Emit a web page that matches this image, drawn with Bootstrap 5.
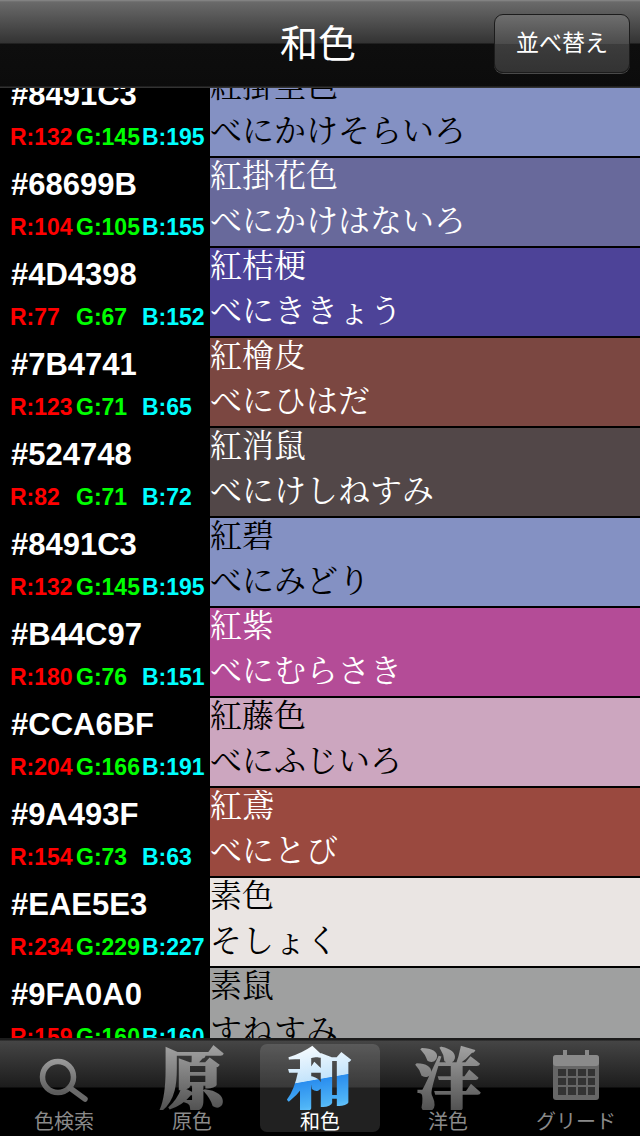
<!DOCTYPE html>
<html lang="ja">
<head>
    <meta charset="UTF-8">
    <meta name="viewport" content="width=device-width, initial-scale=1.0">
    <title>和色</title>
    <link href="https://cdn.jsdelivr.net/npm/bootstrap@5.3.0/dist/css/bootstrap.min.css" rel="stylesheet">
    <style>
        html, body { background: #000; }
        .app-screen { width: 640px; height: 1136px; overflow: hidden; background: #000; font-family: "Liberation Sans", "Noto Sans CJK JP", sans-serif; }

        .top-bar { height: 88px; flex: none; background: linear-gradient(#8a8a8a 0, #6a6a6a 2px, #333 43px, #0e0e0e 44px, #0c0c0c 86px, #333 87px); }
        .top-title { font-family: "Noto Sans CJK JP", sans-serif; font-size: 38px; line-height: 1; color: #fff; left: 280px; top: 22px; }
        .sort-btn { width: 136px; height: 59px; margin: 14px 10px 0 auto; padding: 0 0 5px; font-family: "Noto Sans CJK JP", sans-serif; font-size: 23px; line-height: 1; color: #fff; border: 1px solid #1c1c1c; border-radius: 9px; background: linear-gradient(#6e6e6e, #4c4c4c 50%, #3c3c3c 51%, #333); box-shadow: 0 1px 0 #4a4a4a; }

        .color-list { flex: 1 1 0; min-height: 0; overflow: hidden; }
        .color-rows { margin-top: -20px; }
        .color-row { height: 90px; flex: none; }
        .code-col { width: 210px; flex: none; color: #fff; font-weight: 700; }
        .hex-code { font-size: 31px; line-height: 34px; padding: 10px 0 0 11px; }
        .rgb-line { font-size: 23px; line-height: 26px; padding: 12px 0 0 10px; }
        .rgb-line span { width: 66px; flex: none; white-space: nowrap; }
        .val-r { color: #f00; }
        .val-g { color: #0f0; }
        .val-b { color: #0ff; }
        .swatch { height: 88px; overflow: hidden; font-family: "Liberation Serif", "Noto Serif CJK JP", "Noto Sans CJK JP", serif; font-size: 32px; line-height: 45px; }
        .swatch div { white-space: nowrap; position: relative; top: -4px; }
        .on-dark { color: #fff; }
        .on-light { color: #000; }

        .tab-bar { height: 98px; flex: none; background: linear-gradient(#1c1c1c 0, #1c1c1c 2px, #454545 3px, #1c1c1c 49px, #000 50px); padding: 6px 0 4px; }
        .tab-item { width: 128px; flex: none; height: 88px; font-family: "Noto Sans CJK JP", sans-serif; color: #8a8a8a; font-size: 20px; line-height: 1; }
        .tab-item.on { width: 120px; margin: 0 4px; border-radius: 7px; background: rgba(255,255,255,.13); color: #fff; }
        .tab-icon { height: 66px; flex: none; }
        .tab-glyph { font-family: "Noto Serif CJK JP", "Noto Sans CJK JP", serif; font-weight: 900; font-size: 66px; line-height: 64px; background: linear-gradient(#a4a4a4, #525252); -webkit-background-clip: text; background-clip: text; color: transparent; -webkit-text-stroke: 2px transparent; }
        .tab-item.on .tab-glyph { background: linear-gradient(170deg, #fff 0, #c4e4fb 52%, #2a8eef 53%, #4fb4f6 85%, #7ad0ff); -webkit-background-clip: text; background-clip: text; }
        .icon-search { margin-top: 14px; }
        .icon-calendar { margin-top: 6px; }
        .tab-label { margin-top: 1px; }
    </style>
</head>
<body>
    <div class="app-screen d-flex flex-column">

        <!-- Top bar -->
        <div class="top-bar d-flex position-relative">
            <div class="top-title position-absolute">和色</div>
            <button class="sort-btn" type="button">並べ替え</button>
        </div>

        <!-- Colour list -->
        <div class="color-list">
            <div class="color-rows">
                <div class="color-row d-flex"><div class="code-col"><div class="hex-code">#8491C3</div><div class="rgb-line d-flex"><span class="val-r">R:132</span><span class="val-g">G:145</span><span class="val-b">B:195</span></div></div><div class="swatch flex-grow-1 on-light" style="background:#8491C3"><div>紅掛空色</div><div>べにかけそらいろ</div></div></div>
                <div class="color-row d-flex"><div class="code-col"><div class="hex-code">#68699B</div><div class="rgb-line d-flex"><span class="val-r">R:104</span><span class="val-g">G:105</span><span class="val-b">B:155</span></div></div><div class="swatch flex-grow-1 on-dark" style="background:#68699B"><div>紅掛花色</div><div>べにかけはないろ</div></div></div>
                <div class="color-row d-flex"><div class="code-col"><div class="hex-code">#4D4398</div><div class="rgb-line d-flex"><span class="val-r">R:77</span><span class="val-g">G:67</span><span class="val-b">B:152</span></div></div><div class="swatch flex-grow-1 on-dark" style="background:#4D4398"><div>紅桔梗</div><div>べにききょう</div></div></div>
                <div class="color-row d-flex"><div class="code-col"><div class="hex-code">#7B4741</div><div class="rgb-line d-flex"><span class="val-r">R:123</span><span class="val-g">G:71</span><span class="val-b">B:65</span></div></div><div class="swatch flex-grow-1 on-dark" style="background:#7B4741"><div>紅檜皮</div><div>べにひはだ</div></div></div>
                <div class="color-row d-flex"><div class="code-col"><div class="hex-code">#524748</div><div class="rgb-line d-flex"><span class="val-r">R:82</span><span class="val-g">G:71</span><span class="val-b">B:72</span></div></div><div class="swatch flex-grow-1 on-dark" style="background:#524748"><div>紅消鼠</div><div>べにけしねすみ</div></div></div>
                <div class="color-row d-flex"><div class="code-col"><div class="hex-code">#8491C3</div><div class="rgb-line d-flex"><span class="val-r">R:132</span><span class="val-g">G:145</span><span class="val-b">B:195</span></div></div><div class="swatch flex-grow-1 on-light" style="background:#8491C3"><div>紅碧</div><div>べにみどり</div></div></div>
                <div class="color-row d-flex"><div class="code-col"><div class="hex-code">#B44C97</div><div class="rgb-line d-flex"><span class="val-r">R:180</span><span class="val-g">G:76</span><span class="val-b">B:151</span></div></div><div class="swatch flex-grow-1 on-dark" style="background:#B44C97"><div>紅紫</div><div>べにむらさき</div></div></div>
                <div class="color-row d-flex"><div class="code-col"><div class="hex-code">#CCA6BF</div><div class="rgb-line d-flex"><span class="val-r">R:204</span><span class="val-g">G:166</span><span class="val-b">B:191</span></div></div><div class="swatch flex-grow-1 on-light" style="background:#CCA6BF"><div>紅藤色</div><div>べにふじいろ</div></div></div>
                <div class="color-row d-flex"><div class="code-col"><div class="hex-code">#9A493F</div><div class="rgb-line d-flex"><span class="val-r">R:154</span><span class="val-g">G:73</span><span class="val-b">B:63</span></div></div><div class="swatch flex-grow-1 on-dark" style="background:#9A493F"><div>紅鳶</div><div>べにとび</div></div></div>
                <div class="color-row d-flex"><div class="code-col"><div class="hex-code">#EAE5E3</div><div class="rgb-line d-flex"><span class="val-r">R:234</span><span class="val-g">G:229</span><span class="val-b">B:227</span></div></div><div class="swatch flex-grow-1 on-light" style="background:#EAE5E3"><div>素色</div><div>そしょく</div></div></div>
                <div class="color-row d-flex"><div class="code-col"><div class="hex-code">#9FA0A0</div><div class="rgb-line d-flex"><span class="val-r">R:159</span><span class="val-g">G:160</span><span class="val-b">B:160</span></div></div><div class="swatch flex-grow-1 on-light" style="background:#9FA0A0"><div>素鼠</div><div>すねすみ</div></div></div>
            </div>
        </div>

        <!-- Tab bar -->
        <div class="tab-bar d-flex">
            <div class="tab-item d-flex flex-column align-items-center">
                <div class="tab-icon">
                    <svg class="icon-search d-block" width="50" height="44" viewBox="0 0 50 44"><defs><linearGradient id="gIcon" x1="0" y1="0" x2="0" y2="1"><stop offset="0" stop-color="#989898"/><stop offset="1" stop-color="#5c5c5c"/></linearGradient></defs><circle cx="19" cy="19" r="15.5" fill="none" stroke="url(#gIcon)" stroke-width="5.5"/><path d="M31 30 L46 41" stroke="#6a6a6a" stroke-width="5.5" stroke-linecap="round"/></svg>
                </div>
                <div class="tab-label">色検索</div>
            </div>
            <div class="tab-item d-flex flex-column align-items-center">
                <div class="tab-icon tab-glyph">原</div>
                <div class="tab-label">原色</div>
            </div>
            <div class="tab-item on d-flex flex-column align-items-center">
                <div class="tab-icon tab-glyph">和</div>
                <div class="tab-label">和色</div>
            </div>
            <div class="tab-item d-flex flex-column align-items-center">
                <div class="tab-icon tab-glyph">洋</div>
                <div class="tab-label">洋色</div>
            </div>
            <div class="tab-item d-flex flex-column align-items-center">
                <div class="tab-icon">
                    <svg class="icon-calendar d-block" width="48" height="50" viewBox="0 0 48 50"><rect x="1" y="5" width="46" height="45" rx="3" fill="#666"/><rect x="1" y="5" width="46" height="11" rx="3" fill="#8a8a8a"/><rect x="11" y="0" width="4" height="10" fill="#8a8a8a"/><rect x="33" y="0" width="4" height="10" fill="#8a8a8a"/><path fill="#333" d="M6 19h8v7H6zM16 19h8v7h-8zM26 19h8v7h-8zM36 19h7v7h-7zM6 28h8v7H6zM16 28h8v7h-8zM26 28h8v7h-8zM36 28h7v7h-7zM6 37h8v8H6zM16 37h8v8h-8zM26 37h8v8h-8zM36 37h7v8h-7z"/></svg>
                </div>
                <div class="tab-label">グリード</div>
            </div>
        </div>
    </div>
    <script src="https://cdn.jsdelivr.net/npm/bootstrap@5.3.0/dist/js/bootstrap.bundle.min.js"></script>
</body>
</html>
